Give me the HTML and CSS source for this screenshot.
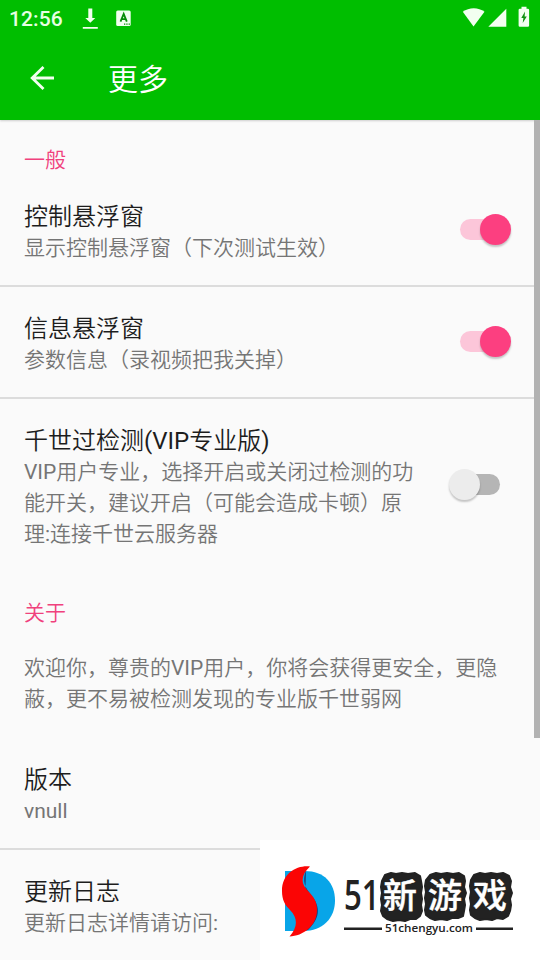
FILE: index.html
```html
<!DOCTYPE html>
<html lang="zh-CN">
<head>
<meta charset="utf-8">
<title>更多</title>
<link rel="stylesheet" href="styles.css">
</head>
<body>
<div class="screen">
  <header class="header">
    <div class="status">
      <span class="clock">12:56</span>
      <svg class="download" width="16" height="22" viewBox="0 0 16 22"><path d="M6.300.5h4v9.500h3L8.300 14.800 3.300 10h3zM.8 19h15v1.800h-15z"/></svg>
      <svg class="badge" width="16" height="17" viewBox="0 0 16 17"><rect x=".2" y=".5" width="14.500" height="15.500" rx="1.500"/><path d="M4.500 11.700 7.700 4l3.100 7.700M5.500 9.200h4.400" class="badge-mark"/><path d="M8 13.600h1.300v1.200H8zm2.300 0h1.300v1.200h-1.300zm2.300 0h1.300v1.200h-1.300z" class="badge-dots"/></svg>
      <span class="spacer"></span>
      <svg class="wifi" width="24" height="20" viewBox="0 0 24 20"><path d="M.8 4.800C7 0 16.500 0 22.500 4.800L11.500 19.500z"/></svg>
      <svg class="signal" width="19" height="19" viewBox="0 0 19 19"><path d="M.3 18.800 18.300.8v18z"/></svg>
      <svg class="battery" width="12" height="21" viewBox="0 0 12 21"><path d="M3.500.8h5v2h1.300q1.300 0 1.300 1.300v15.300q0 1.300-1.300 1.300H1.900Q.6 20.700.6 19.400V4.100q0-1.300 1.300-1.300h1.600z"/><path d="M7 5.500 3.300 12h2.100l-.7 5L8.800 10.500H6.600z" class="bolt"/></svg>
    </div>
    <div class="toolbar">
      <svg class="back" width="26" height="26" viewBox="0 0 26 26"><path d="M14.500 2 3.200 13 14.500 24M3.200 13h21.800"/></svg>
      <h1>更多</h1>
    </div>
  </header>
  <main class="content">
    <h2 class="section">一般</h2>
    <section class="item first">
      <div><h3>控制悬浮窗</h3><p>显示控制悬浮窗（下次测试生效）</p></div>
      <span class="switch on"><i></i></span>
    </section>
    <section class="item">
      <div><h3>信息悬浮窗</h3><p>参数信息（录视频把我关掉）</p></div>
      <span class="switch on"><i></i></span>
    </section>
    <section class="item last">
      <div><h3>千世过检测(VIP专业版)</h3><p>VIP用户专业，选择开启或关闭过检测的功<br>能开关，建议开启（可能会造成卡顿）原<br>理:连接千世云服务器</p></div>
      <span class="switch"><i></i></span>
    </section>
    <h2 class="section about">关于</h2>
    <p class="welcome">欢迎你，尊贵的VIP用户，你将会获得更安全，更隐<br>蔽，更不易被检测发现的专业版千世弱网</p>
    <section class="item">
      <div><h3>版本</h3><p>vnull</p></div>
    </section>
    <section class="item last">
      <div><h3>更新日志</h3><p>更新日志详情请访问:</p></div>
    </section>
  </main>
  <div class="scrollbar"></div>
  <svg class="brand" width="280" height="120" viewBox="0 0 280 120">
    <path d="M25 31h20c19 0 30 12 30 29.500S63 91 43 91H25z" fill="#08a5e8"/>
    <path d="M46 30c-4 12-1 17 5 25 11 13 8 24-3 35l-6 1 3-30z" fill="#173a78"/>
    <path d="M50 26.500C37 25 22 33 22 51c0 9 3 14 8 19 8 8 8 17-.5 26.500C43 96 57 86 57 70c0-8-3-13-9-19-7-7-8-15 2-24.500z" fill="#fb0505"/>
    <g class="blocks">
      <path d="M125 35l6-2 5 1 6-1 6 1 7-1 5 3 1 5 1 6-1 6 1 6-1 6 1 6-2 5-4 3-6 0-5 2-6-1-6 1-6-2-4-3-2-5 1-6-1-6 1-6-1-6 1-6z"/>
      <path d="M170 35l6-2 5 1 6-1 6 1 6-1 5 3 1 5-1 6 2 6-2 6 1 6-1 6-1 5-5 2-6 0-5 2-6-1-6 1-5-2-4-3-1-5 1-6-1-6 1-6-1-6 1-6z"/>
      <path d="M214 35l6-2 5 1 6-1 6 1 6-1 6 3 2 5-1 6 2 6-2 6 1 6-1 6-2 5-5 3-6-1-5 2-6-1-6 1-5-2-4-3-1-5 1-6-1-6 1-6-1-6 1-6z"/>
    </g>
    <text transform="translate(84 70) scale(.76 1)" class="number">51</text>
    <text x="123" y="67.500" class="name">新</text>
    <text x="168" y="67.500" class="name">游</text>
    <text x="213" y="67.500" class="name">戏</text>
    <path d="M84 87.500h38v2.500H84zM216 87.500h37v2.500h-37z" fill="#222"/>
    <text x="125" y="92" class="domain" textLength="88" lengthAdjust="spacingAndGlyphs">51chengyu.com</text>
  </svg>
</div>
</body>
</html>
```
FILE: styles.css
```css
* { box-sizing: border-box; }
body { margin: 0; }
h1, h2, h3, p { margin: 0; font-weight: 400; white-space: nowrap; }
svg { display: block; }
.screen {
  position: relative;
  width: 540px;
  height: 960px;
  overflow: hidden;
  background: #fafafa;
  font-family: Roboto, "Noto Sans CJK SC DemiLight", "Noto Sans CJK SC", sans-serif;
}
.header {
  height: 120px;
  background: #00be00;
  color: #fff;
  box-shadow: 0 1px 2px rgba(0, 0, 0, .18);
}
.status {
  display: flex;
  height: 36px;
  padding: 0 10px 0 9px;
  align-items: flex-start;
  fill: #f2fff0;
}
.clock {
  width: 73px;
  padding-top: 7px;
  font-size: 21px;
  font-weight: 500;
  line-height: 24px;
  letter-spacing: .1px;
  color: #e6ffe2;
}
.download { margin-top: 8px; }
.badge { margin: 10px 0 0 18px; }
.badge-mark { fill: none; stroke: #078c07; stroke-width: 1.8; }
.badge-dots { fill: #078c07; }
.spacer { flex: 1; }
.wifi { margin-top: 7px; }
.signal { margin: 8px 0 0 2px; }
.battery { margin: 6px 0 0 11px; }
.bolt { fill: #109010; }
.toolbar {
  display: flex;
  height: 84px;
  padding-left: 29px;
  align-items: center;
}
.back { fill: none; stroke: #f2fff0; stroke-width: 2.800; }
.toolbar h1 { margin: 3px 0 0 53px; font-size: 30px; line-height: 40px; }
.content { height: 840px; }
.section {
  height: 81px;
  padding-left: 24px;
  font-size: 21px;
  line-height: 81px;
  color: #f0417d;
}
.item {
  display: flex;
  padding: 26px 40px 21px 24px;
  justify-content: space-between;
  align-items: center;
  border-bottom: 2px solid #dcdcdc;
}
.item.first { padding-top: 0; }
.item.last { border-bottom: 0; }
h3 { font-size: 24px; line-height: 32px; color: #1d1d1d; }
.item p, .welcome { font-size: 21px; line-height: 31px; color: #757575; }
.about { height: 82px; line-height: 85px; }
.welcome { height: 85px; padding-left: 24px; }
.switch {
  position: relative;
  top: -3px;
  width: 40px;
  height: 21px;
  border-radius: 11px;
  background: #b5b5b5;
}
.switch i {
  position: absolute;
  top: -5px;
  left: -11px;
  width: 31px;
  height: 31px;
  border-radius: 50%;
  background: #ececec;
  box-shadow: 0 2px 2px rgba(0, 0, 0, .22);
}
.switch.on { background: #fcc6d9; }
.switch.on i { left: 20px; background: #fc3f80; }
.first .switch { margin-top: -1px; }
.scrollbar {
  position: absolute;
  top: 120px;
  right: 0;
  width: 6px;
  height: 618px;
  background: #b2b2b2;
}
.brand { position: absolute; right: 0; bottom: 0; background: #fff; }
.blocks { fill: #222; stroke: #222; stroke-width: 2; stroke-linejoin: round; }
.number { font: 600 41px "Open Sans", sans-serif; fill: #222; }
.name { font: 500 34px "Noto Sans CJK SC", sans-serif; fill: #fff; stroke: #fff; stroke-width: .4; }
.domain { font: 600 10.500px "Open Sans", sans-serif; fill: #222; }
```
